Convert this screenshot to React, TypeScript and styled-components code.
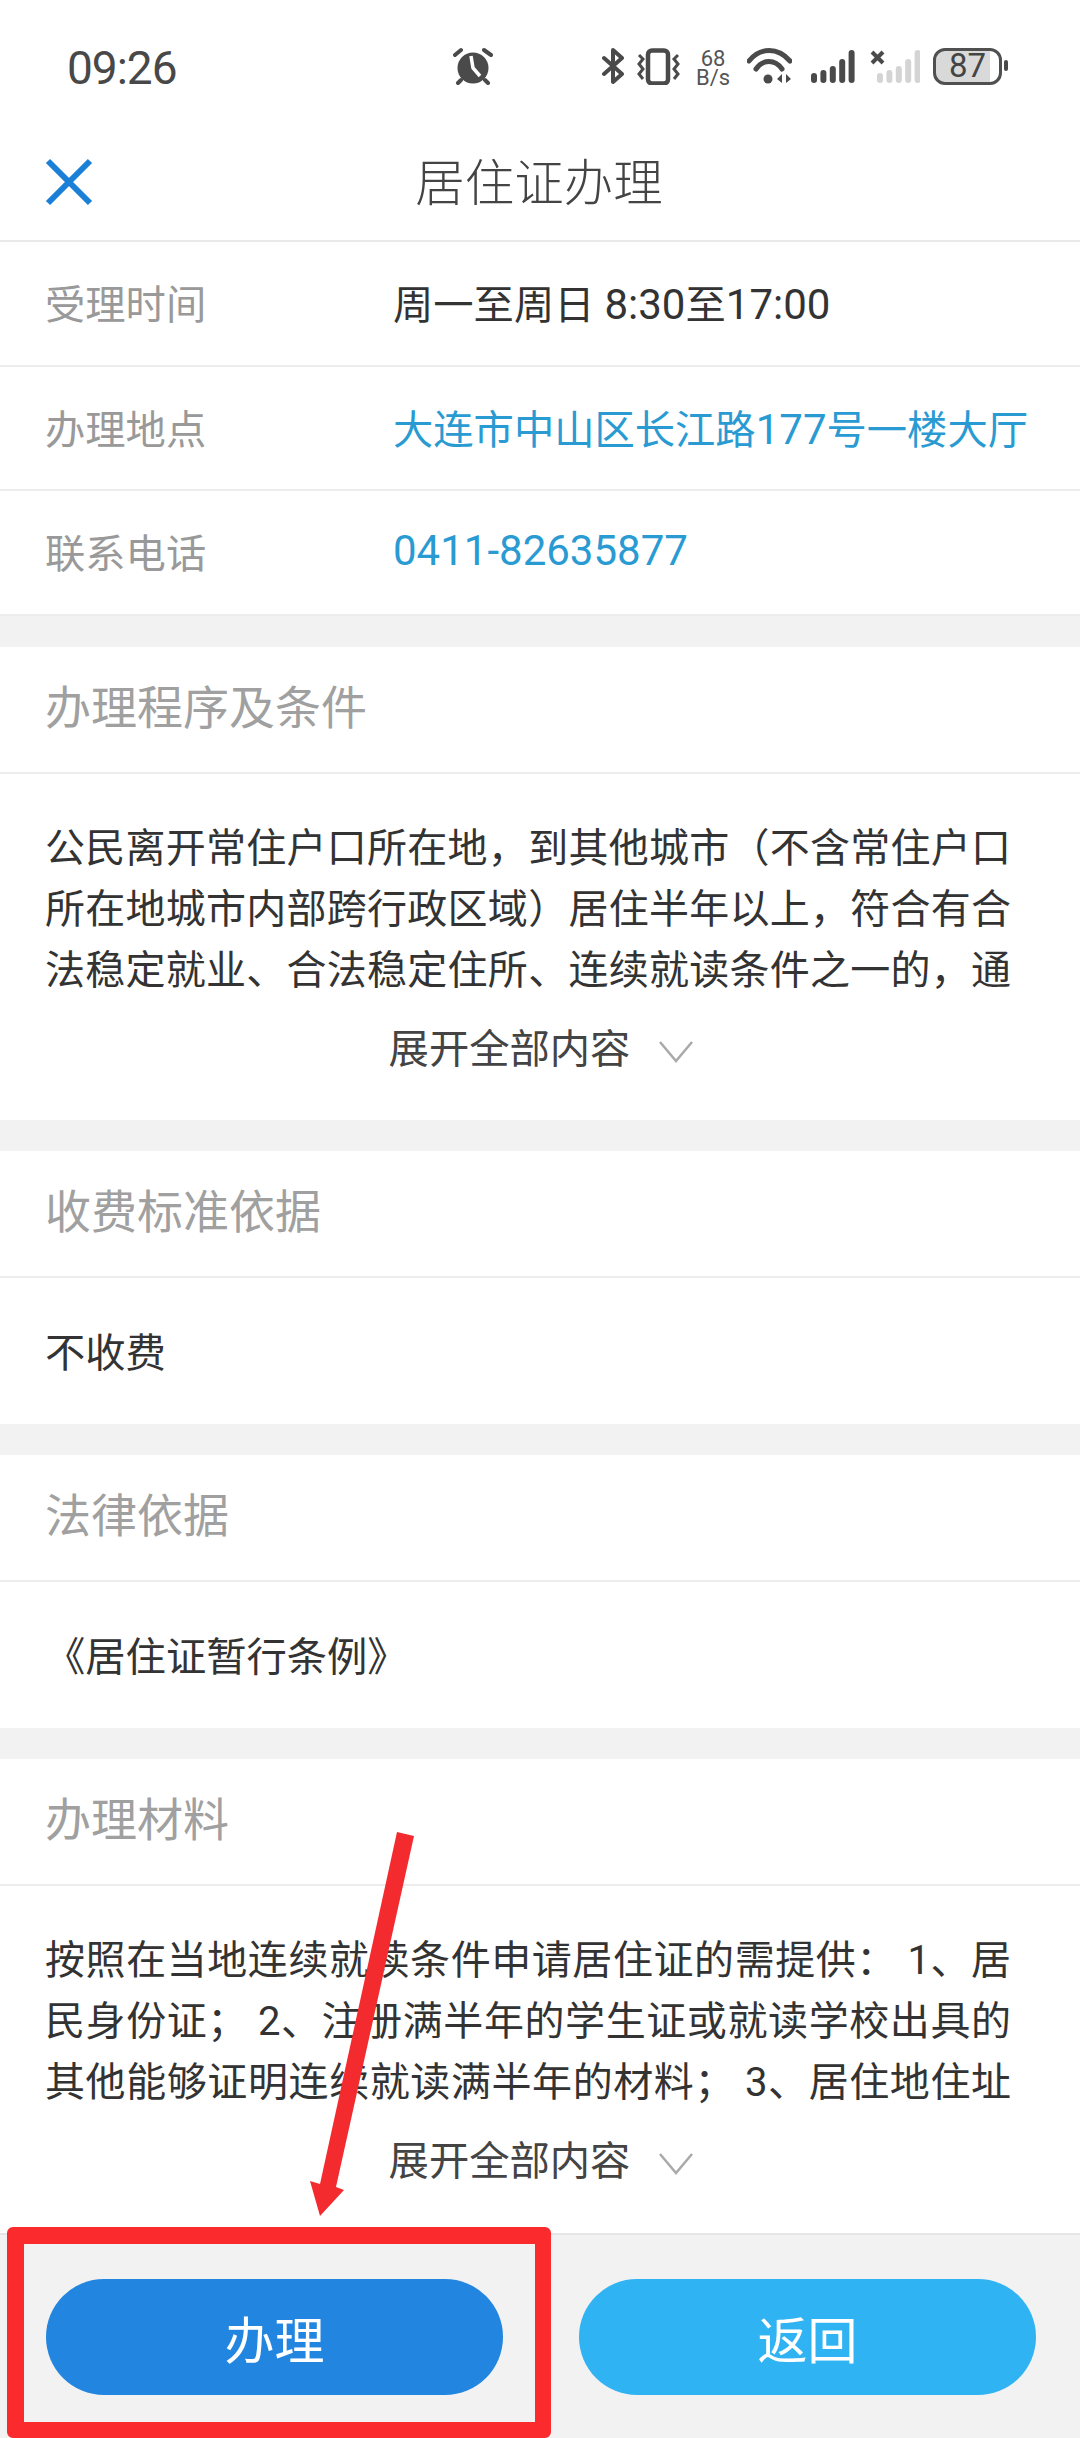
import React from 'react';
import styled, { createGlobalStyle } from 'styled-components';

const GlobalStyle = createGlobalStyle`
  html, body {
    margin: 0;
    padding: 0;
    background: #fff;
  }
  * {
    box-sizing: border-box;
  }
`;

const Page = styled.div`
  position: relative;
  width: 1080px;
  height: 2438px;
  overflow: hidden;
  display: flex;
  flex-direction: column;
  background: #f2f2f2;
  font-family: 'Roboto', 'Noto Sans CJK SC', sans-serif;
`;

const StatusBar = styled.div`
  height: 122px;
  flex: none;
  background: #fff;
  display: flex;
  align-items: flex-start;
  padding: 47px 0 0 67px;
`;

const Time = styled.div`
  width: 386px;
  font-size: 46px;
  line-height: 42px;
  letter-spacing: -1px;
  color: #484848;
`;

const StatusIcons = styled.div`
  display: flex;
  align-items: flex-start;
  margin-left: 107px;
`;

const StatusIcon = styled.svg<{ $gap?: number }>`
  flex: none;
  margin-left: ${({ $gap }) => $gap ?? 0}px;
`;

const Speed = styled.div`
  width: 34px;
  margin: 2px 0 0 16px;
  font-size: 22px;
  line-height: 19px;
  text-align: center;
  color: #555;
`;

const Battery = styled.div`
  position: relative;
  width: 69px;
  height: 37px;
  margin: 1px 0 0 13px;
  border: 3.5px solid #505050;
  border-radius: 12px;
  background: linear-gradient(90deg, #d9d9d9 85%, #fff 85%);
  font-size: 33px;
  line-height: 30px;
  text-align: center;
  color: #444;
`;

const Nub = styled.div`
  position: absolute;
  right: -9px;
  top: 9px;
  width: 4px;
  height: 11px;
  border-radius: 2px;
  background: #4a4a4a;
`;

const NavBar = styled.div`
  position: relative;
  height: 120px;
  flex: none;
  background: #fff;
  border-bottom: 2px solid #e9e9e9;
  display: flex;
  align-items: center;
  justify-content: center;
`;

const CloseIcon = styled.svg`
  position: absolute;
  left: 45px;
  top: 36px;
`;

const Title = styled.div`
  font-size: 49.5px;
  font-weight: 300;
  color: #444;
  transform: translate(-1px, -2px);
`;

const InfoList = styled.div`
  background: #fff;
  flex: none;
`;

const InfoRow = styled.div`
  height: 124.5px;
  display: flex;
  align-items: center;
  padding: 0 0 3px 45px;
  font-size: 40.3px;
  border-bottom: 2px solid #ececec;
`;

const InfoLabel = styled.div`
  width: 348px;
  color: #999;
`;

const InfoValue = styled.div<{ $link?: boolean }>`
  color: ${({ $link }) => ($link ? '#2a9bd2' : '#333')};
`;

const Num = styled.span`
  font-size: 42px;
`;

const Section = styled.div`
  margin-top: 31px;
  flex: none;
  background: #fff;
`;

const SectionHead = styled.div`
  height: 127px;
  display: flex;
  align-items: center;
  padding: 0 0 10px 45px;
  font-size: 46px;
  color: #a0a0a0;
  border-bottom: 2px solid #ececec;
`;

const SimpleBody = styled.div`
  height: 146px;
  display: flex;
  align-items: center;
  padding: 0 0 3px 45px;
  font-size: 40.3px;
  color: #333;
`;

const Paragraph = styled.div`
  width: 1011px;
  height: 247px;
  padding: 44px 0 0 45px;
  font-size: 40px;
  line-height: 61px;
  color: #333;
  overflow: hidden;
  text-align: justify;
  text-align-last: justify;
`;

const ExpandRow = styled.div<{ $height: number }>`
  height: ${({ $height }) => $height}px;
  display: flex;
  justify-content: center;
  align-items: flex-start;
  gap: 28px;
  padding-left: 3px;
  font-size: 40.3px;
  line-height: 58px;
  color: #444;
`;

const Chevron = styled.svg`
  margin-top: 18px;
`;

const Footer = styled.div`
  flex: 1;
  display: flex;
  justify-content: space-between;
  padding: 44px 44px 0 46px;
  border-top: 2px solid #e6e6e6;
`;

const ActionButton = styled.div<{ $primary?: boolean }>`
  width: 457px;
  height: 116px;
  border-radius: 58px;
  display: flex;
  align-items: center;
  justify-content: center;
  font-size: 50px;
  color: #fff;
  background: ${({ $primary }) => ($primary ? '#2285e0' : '#30b3f3')};
`;

const RedBox = styled.div`
  position: absolute;
  left: 7px;
  top: 2227px;
  width: 544px;
  height: 211px;
  border: solid #fa2a2d;
  border-width: 17px 16px 16px 17px;
  border-radius: 6px;
`;

const ArrowSvg = styled.svg`
  position: absolute;
  left: 0;
  top: 0;
`;

const Chev = () => (
  <Chevron width="36" height="24" viewBox="0 0 36 24">
    <path d="M2 3 L18 22 L34 3" fill="none" stroke="#aaa" strokeWidth="2.5" />
  </Chevron>
);

const BAR_TOPS = [26, 23, 19, 12, 3];

const Bars = ({ color, x = 0 }: { color: string; x?: number }) => (
  <g fill={color}>
    {BAR_TOPS.map((top, i) => (
      <rect key={i} x={x + i * 9.4} y={top} width="6" height={36 - top} rx="3" />
    ))}
  </g>
);

const App: React.FC = () => {
  return (
    <Page lang="zh-CN">
      <GlobalStyle />
      <StatusBar>
        <Time>09:26</Time>
        <StatusIcon width="42" height="38" viewBox="0 0 42 38">
          <circle cx="20" cy="21" r="15.5" fill="#4a4a4a" />
          <path d="M18 9 L20 21 L27 29" fill="none" stroke="#fff" strokeWidth="3.5" />
          <path d="M2 8 L8 3 M31 3 L38 8 M8 33 L5 36 M32 33 L35 36" stroke="#4a4a4a" strokeWidth="4" strokeLinecap="round" />
        </StatusIcon>
        <StatusIcons>
          <StatusIcon width="22" height="38" viewBox="0 0 22 38">
            <path d="M2 11 L20 27 L11 35 V3 L20 11 L2 27" fill="none" stroke="#4a4a4a" strokeWidth="4" strokeLinejoin="round" strokeLinecap="round" />
          </StatusIcon>
          <StatusIcon $gap={13} width="43" height="38" viewBox="0 0 43 38">
            <rect x="11" y="3.5" width="20" height="33" rx="4" fill="none" stroke="#4a4a4a" strokeWidth="4.5" />
            <path d="M2 8 L6 12 L2 17 L6 22 L2 27 L6 32 M41 8 L37 12 L41 17 L37 22 L41 27 L37 32" fill="none" stroke="#4a4a4a" strokeWidth="3" />
          </StatusIcon>
          <Speed>68<br />B/s</Speed>
          <StatusIcon $gap={17} width="45" height="38" viewBox="0 0 45 38">
            <path d="M2 14 C13 0 31 0 43 14 M9 22 C16 12 28 12 35 22" fill="none" stroke="#4a4a4a" strokeWidth="5" strokeLinecap="round" />
            <circle cx="21" cy="32" r="4.5" fill="#4a4a4a" />
            <path d="M35 27 V36 L30 32 Z M39 27 L44 32 L39 36 Z" fill="#4a4a4a" />
          </StatusIcon>
          <StatusIcon $gap={19} width="44" height="38" viewBox="0 0 44 38">
            <Bars color="#4a4a4a" />
          </StatusIcon>
          <StatusIcon $gap={15} width="50" height="38" viewBox="0 0 50 38">
            <Bars color="#d4d4d4" x={7} />
            <path d="M2 5 L13 16 M13 5 L2 16" stroke="#4a4a4a" strokeWidth="4" />
          </StatusIcon>
          <Battery>
            87
            <Nub />
          </Battery>
        </StatusIcons>
      </StatusBar>

      <NavBar>
        <CloseIcon width="48" height="48" viewBox="0 0 48 48">
          <path d="M3 3 L45 45 M45 3 L3 45" stroke="#1a7fd6" strokeWidth="6" />
        </CloseIcon>
        <Title>居住证办理</Title>
      </NavBar>

      <InfoList>
        <InfoRow>
          <InfoLabel>受理时间</InfoLabel>
          <InfoValue>周一至周日 <Num>8:30</Num>至<Num>17:00</Num></InfoValue>
        </InfoRow>
        <InfoRow>
          <InfoLabel>办理地点</InfoLabel>
          <InfoValue $link>大连市中山区长江路<Num>177</Num>号一楼大厅</InfoValue>
        </InfoRow>
        <InfoRow>
          <InfoLabel>联系电话</InfoLabel>
          <InfoValue $link><Num>0411-82635877</Num></InfoValue>
        </InfoRow>
      </InfoList>

      <Section>
        <SectionHead>办理程序及条件</SectionHead>
        <Paragraph>
          公民离开常住户口所在地，到其他城市（不含常住户口所在地城市内部跨行政区域）居住半年以上，符合有合法稳定就业、合法稳定住所、连续就读条件之一的，通
        </Paragraph>
        <ExpandRow $height={99}>
          展开全部内容
          <Chev />
        </ExpandRow>
      </Section>

      <Section>
        <SectionHead>收费标准依据</SectionHead>
        <SimpleBody>不收费</SimpleBody>
      </Section>

      <Section>
        <SectionHead>法律依据</SectionHead>
        <SimpleBody>《居住证暂行条例》</SimpleBody>
      </Section>

      <Section>
        <SectionHead>办理材料</SectionHead>
        <Paragraph>
          按照在当地连续就读条件申请居住证的需提供： 1、居民身份证； 2、注册满半年的学生证或就读学校出具的其他能够证明连续就读满半年的材料； 3、居住地住址
        </Paragraph>
        <ExpandRow $height={100}>
          展开全部内容
          <Chev />
        </ExpandRow>
      </Section>

      <Footer>
        <ActionButton $primary>办理</ActionButton>
        <ActionButton>返回</ActionButton>
      </Footer>

      <RedBox />
      <ArrowSvg width="1080" height="2438" viewBox="0 0 1080 2438">
        <path d="M397 1832 L414 1836 L336 2187 L344 2190 L320 2216 L310 2181 L320 2184 Z" fill="#f32b2f" />
      </ArrowSvg>
    </Page>
  );
};

export default App;
